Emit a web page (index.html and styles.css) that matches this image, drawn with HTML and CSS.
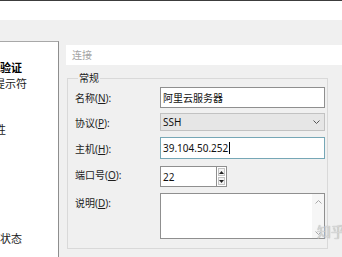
FILE: index.html
```html
<!DOCTYPE html>
<html lang="zh-CN">
<head>
<meta charset="utf-8">
<title>会话属性</title>
<link rel="stylesheet" href="styles.css">
</head>
<body>
<div class="titlebar"></div>
<div class="main">
  <div class="tree">
    <div class="tree-item sel off-a">用户身份验证</div>
    <div class="tree-item off-b">登录提示符</div>
    <div class="tree-item"></div>
    <div class="tree-item"></div>
    <div class="tree-item off-c">安全性</div>
    <div class="tree-item"></div>
    <div class="tree-item"></div>
    <div class="tree-item"></div>
    <div class="tree-item"></div>
    <div class="tree-item"></div>
    <div class="tree-item"></div>
    <div class="tree-item off-d">保持活动状态</div>
  </div>
  <div class="content">
    <div class="section-title">连接</div>
    <fieldset class="group">
      <legend>常规</legend>
      <div class="row row-name">
        <label class="lbl">名称(<u>N</u>):</label>
        <div class="field">阿里云服务器</div>
      </div>
      <div class="row row-proto">
        <label class="lbl">协议(<u>P</u>):</label>
        <div class="field select">
          <span>SSH</span>
          <svg class="chev" width="7" height="4" viewBox="0 0 7 4"><path d="M0.5 0.5 L3.5 3.5 L6.5 0.5" fill="none" stroke="#555" stroke-width="1"/></svg>
        </div>
      </div>
      <div class="row row-host">
        <label class="lbl">主机(<u>H</u>):</label>
        <div class="field focus">39.104.50.252<span class="caret"></span></div>
      </div>
      <div class="row row-port">
        <label class="lbl">端口号(<u>O</u>):</label>
        <div class="port">
          <div class="field port-input">22</div>
          <div class="spin">
            <div class="spin-btn"><svg width="5" height="3" viewBox="0 0 5 3"><path d="M0 3 L2.5 0 L5 3 Z" fill="#222"/></svg></div>
            <div class="spin-btn"><svg width="5" height="3" viewBox="0 0 5 3"><path d="M0 0 L2.5 3 L5 0 Z" fill="#222"/></svg></div>
          </div>
        </div>
      </div>
      <div class="row row-desc">
        <label class="lbl">说明(<u>D</u>):</label>
        <div class="field textarea">
          <div class="text-area-body"></div>
          <div class="vscroll">
            <svg width="7" height="4" viewBox="0 0 7 4"><path d="M0.5 3.5 L3.5 0.5 L6.5 3.5" fill="none" stroke="#a8a8a8" stroke-width="1"/></svg>
            <svg width="7" height="4" viewBox="0 0 7 4"><path d="M0.5 0.5 L3.5 3.5 L6.5 0.5" fill="none" stroke="#a8a8a8" stroke-width="1"/></svg>
          </div>
        </div>
      </div>
    </fieldset>
  </div>
</div>
<div class="watermark">知乎</div>
</body>
</html>
```

FILE: styles.css
```css
* { box-sizing: border-box; }
html, body { margin: 0; padding: 0; }
body {
  width: 342px;
  height: 257px;
  overflow: hidden;
  position: relative;
  background: #f0f0f0;
  font-family: "Noto Sans", "Noto Sans CJK SC", sans-serif;
  font-size: 10px;
  color: #1e1e1e;
}
.titlebar {
  height: 20px;
  border-top: 1px solid #3c3c3c;
  background: #ffffff;
}
.main {
  display: flex;
  padding-top: 21px;
  height: 237px;
}
.tree {
  flex: 0 0 59px;
  background: #ffffff;
  border-top: 1px solid #a8a8a8;
  border-right: 1px solid #8e8e8e;
  padding-top: 18px;
  overflow: hidden;
  font-size: 11px;
}
.tree-item {
  height: 15.5px;
  line-height: 15.5px;
  white-space: nowrap;
  color: #1a1a1a;
}
.tree-item.sel { color: #000; font-weight: 600; }
.off-a { margin-left: -44px; }
.off-b { margin-left: -28px; }
.off-c { margin-left: -27px; }
.off-d { margin-left: -44px; }

.content {
  flex: 1;
  padding-left: 7px;
  min-width: 0;
}
.section-title {
  margin-top: 4px;
  height: 20px;
  line-height: 20px;
  background: #ffffff;
  color: #a4a4a4;
  padding-left: 6px;
}
.group {
  margin: 7px 0 0 1px;
  width: 261px;
  border: 1px solid #d9d9d9;
  padding: 3px 2px 9px 7px;
  min-width: 0;
}
.group legend {
  margin-left: 3px;
  padding: 0 1px;
  line-height: 12px;
  color: #1a1a1a;
}
.row {
  display: flex;
  align-items: center;
}
.lbl {
  flex: 0 0 85px;
  color: #1e1e1e;
}
.lbl u { text-decoration: underline; text-underline-offset: 1px; }
.field {
  width: 165px;
  background: #ffffff;
  border: 1px solid #8f8f8f;
  padding-left: 2px;
  display: flex;
  align-items: center;
  color: #111;
  white-space: nowrap;
}
.row-name { margin-bottom: 5px; }
.row-name .field { height: 21px; }
.row-proto { margin-bottom: 6px; }
.select {
  height: 18px;
  background: #e6e6e6;
  border-color: #c2c2c2;
  justify-content: space-between;
  padding-right: 4px;
}
.row-host { margin-bottom: 7px; }
.focus {
  height: 22px;
  border-color: #76a7b6;
}
.caret {
  display: inline-block;
  width: 1px;
  height: 12px;
  background: #000;
  margin-left: 1px;
}
.row-port { margin-bottom: 6px; align-items: flex-start; }
.row-port .lbl { padding-top: 1px; }
.port {
  display: flex;
  height: 21px;
}
.port-input {
  width: 56px;
  height: 21px;
  border-right: none;
}
.spin {
  width: 11px;
  display: flex;
  flex-direction: column;
  border: 1px solid #8f8f8f;
  background: #fff;
  padding: 1px;
  gap: 1px;
}
.spin-btn {
  flex: 1;
  background: #f3f3f3;
  border: 1px solid #c4c4c4;
  display: flex;
  align-items: center;
  justify-content: center;
}
.row-desc { align-items: flex-start; }
.row-desc .lbl { padding-top: 2px; }
.textarea {
  height: 46px;
  padding-left: 0;
  align-items: stretch;
}
.text-area-body { flex: 1; }
.vscroll {
  width: 12px;
  background: #f6f6f6;
  display: flex;
  flex-direction: column;
  justify-content: space-between;
  align-items: center;
  padding: 6px 0 3px;
}
.watermark {
  position: absolute;
  left: 317px;
  top: 223px;
  font-size: 14px;
  line-height: 18px;
  color: #d6d6d6;
  text-shadow: 0 0 1px #a0a0a0;
  white-space: nowrap;
}
```
